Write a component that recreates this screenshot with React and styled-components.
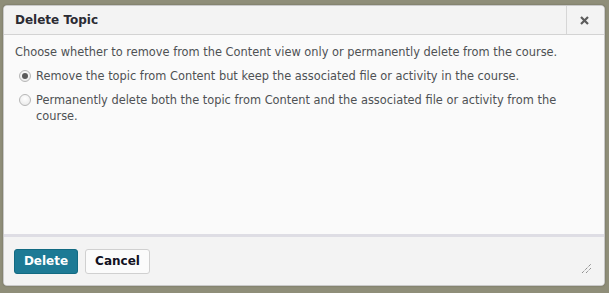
import React from "react";
import styled, { createGlobalStyle } from "styled-components";

const Global = createGlobalStyle`
  html, body { margin: 0; padding: 0; }
  body {
    background: #8e8e78;
    font-family: Verdana, "DejaVu Sans", sans-serif;
    width: 609px;
    height: 293px;
    overflow: hidden;
  }
`;

const Page = styled.div`
  width: 609px;
  height: 293px;
  padding: 5px 4px 0 3px;
  box-sizing: border-box;
  background: #8f8e79;
`;

const Dialog = styled.div`
  height: 281px;
  box-sizing: border-box;
  background: #f9f9f9;
  border: 1px solid #c9c9c9;
  border-radius: 4px;
  box-shadow: 0 0 2px rgba(0, 0, 0, 0.25);
  display: flex;
  flex-direction: column;
  overflow: hidden;
`;

const TitleBar = styled.div`
  height: 28px;
  flex: none;
  display: flex;
  align-items: stretch;
  background: #f3f3f3;
  border-bottom: 1px solid #d3d3d3;
`;

const Title = styled.h1`
  flex: 1;
  margin: 0;
  padding-left: 11px;
  display: flex;
  align-items: center;
  font-size: 12px;
  font-weight: bold;
  color: #2b2b33;
`;

const CloseButton = styled.button`
  width: 38px;
  border: none;
  border-left: 1px solid #d6d6d6;
  background: transparent;
  display: flex;
  align-items: center;
  justify-content: center;
  padding: 0 3px 0 0;
  color: #5f5f5f;
`;

const Body = styled.div`
  flex: 1;
  padding: 9px 11px 0 11px;
  color: #4e5154;
  font-size: 11.4px;
  background: #fafafa;
  border-bottom: 3px solid #dedde4;
`;

const Intro = styled.p`
  margin: 0 0 8px 0;
  line-height: 16px;
`;

const Option = styled.label`
  display: flex;
  align-items: flex-start;
  gap: 5px;
  padding-left: 4px;
  margin-bottom: 8px;
  line-height: 16px;
`;

const Radio = styled.span`
  flex: none;
  width: 12px;
  height: 12px;
  margin-top: 2px;
  border-radius: 50%;
  box-sizing: border-box;
  border: 1px solid #b6b6b6;
  background: radial-gradient(circle at 50% 35%, #ffffff 0%, #e6e6e6 100%);
  display: flex;
  align-items: center;
  justify-content: center;
  &::after {
    content: "";
    display: ${(p) => (p.$checked ? "block" : "none")};
    width: 6px;
    height: 6px;
    border-radius: 50%;
    background: #5a5a5a;
  }
`;

const Footer = styled.div`
  height: 48px;
  flex: none;
  display: flex;
  align-items: center;
  gap: 7px;
  padding: 0 10px;
  background: #f3f3f3;
  position: relative;
`;

const Button = styled.button`
  height: 25px;
  box-sizing: border-box;
  width: ${(p) => (p.$primary ? "64px" : "65px")};
  padding: 0;
  font-family: Verdana, "DejaVu Sans", sans-serif;
  font-size: 12px;
  font-weight: bold;
  border-radius: 3px;
  border: 1px solid ${(p) => (p.$primary ? "#126a82" : "#d0d0d0")};
  background: ${(p) => (p.$primary ? "#1d7a95" : "#fbfbfb")};
  color: ${(p) => (p.$primary ? "#ffffff" : "#111122")};
`;

const Grip = styled.svg`
  position: absolute;
  right: 13px;
  bottom: 12px;
`;

export default function App() {
  return (
    <>
      <Global />
      <Page>
        <Dialog>
          <TitleBar>
            <Title>Delete Topic</Title>
            <CloseButton aria-label="Close">
              <svg width="9" height="9" viewBox="0 0 9 9">
                <path d="M1 1 L8 8 M8 1 L1 8" stroke="#5c5c5c" strokeWidth="2.2" />
              </svg>
            </CloseButton>
          </TitleBar>
          <Body>
            <Intro>
              Choose whether to remove from the Content view only or permanently delete from the course.
            </Intro>
            <Option>
              <Radio $checked />
              <span>Remove the topic from Content but keep the associated file or activity in the course.</span>
            </Option>
            <Option>
              <Radio />
              <span>
                Permanently delete both the topic from Content and the associated file or activity from the
                course.
              </span>
            </Option>
          </Body>
          <Footer>
            <Button $primary>Delete</Button>
            <Button>Cancel</Button>
            <Grip width="10" height="10" viewBox="0 0 10 10">
              <path d="M1 10 L10 1 M5 10 L10 5" stroke="#666" strokeWidth="1" strokeDasharray="1 1" />
            </Grip>
          </Footer>
        </Dialog>
      </Page>
    </>
  );
}
